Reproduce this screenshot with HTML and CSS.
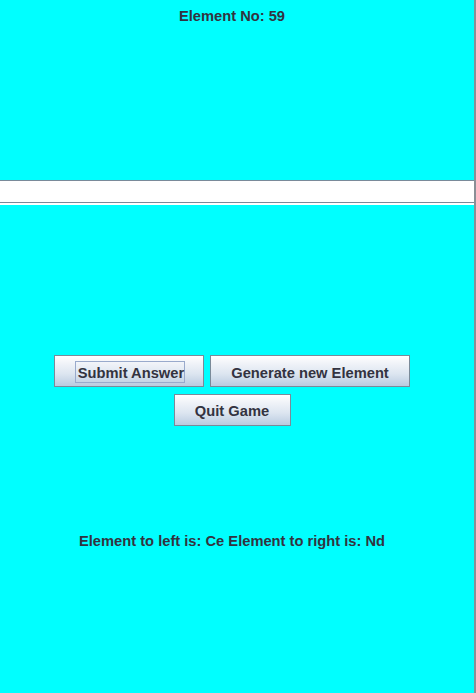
FILE: index.html
```html
<!DOCTYPE html>
<html>
<head>
<meta charset="utf-8">
<link rel="stylesheet" href="styles.css">
</head>
<body>
<div class="app">
  <div class="title">Element No: 59</div>
  <div class="field"><div class="field-inner"></div></div>
  <div class="controls">
    <div class="row">
      <button class="btn btn-submit"><span class="focus">Submit Answer</span></button>
      <button class="btn btn-gen">Generate new Element</button>
    </div>
    <div class="row row2">
      <button class="btn btn-quit">Quit Game</button>
    </div>
  </div>
  <div class="hint">Element to left is: Ce Element to right is: Nd</div>
</div>
</body>
</html>
```
FILE: styles.css
```css
html, body {
  margin: 0;
  padding: 0;
  background: #00ffff;
}
.app {
  width: 474px;
  height: 693px;
  background: #00ffff;
  border-right: 2px solid #8a8f96;
  font-family: "Liberation Sans", Arial, sans-serif;
  font-weight: bold;
  font-size: 14.7px;
  color: #333340;
  overflow: hidden;
  white-space: nowrap;
}
.title {
  height: 173px;
  padding-top: 7px;
  line-height: 18px;
  text-align: center;
  padding-right: 10px;
  box-sizing: content-box;
}
.field {
  height: 25px;
  box-sizing: border-box;
  background: #ffffff;
  border-top: 1px solid #7a8a99;
}
.field-inner {
  height: 21px;
  border-bottom: 1px solid #7a8a99;
}
.controls {
  margin-top: 150px;
  width: 464px;
}
.row {
  display: flex;
  justify-content: center;
  gap: 6px;
}
.row2 {
  margin-top: 7px;
}
.btn {
  height: 32px;
  box-sizing: border-box;
  border: 1px solid #7a8a99;
  background: linear-gradient(to bottom, #ffffff 0%, #f0f3f8 25%, #dce5f0 60%, #b9cbe0 100%);
  font: inherit;
  color: inherit;
  padding: 0;
  display: flex;
  align-items: center;
  justify-content: center;
  white-space: nowrap;
}
.btn-submit { width: 150px; }
.btn-gen { width: 200px; padding-top: 3px; }
.btn-quit { width: 117px; padding-top: 2px; }
.focus {
  border: 1px solid #99aacc;
  width: 110px;
  height: 22px;
  box-sizing: border-box;
  display: flex;
  align-items: center;
  justify-content: center;
  margin-left: 2px;
  margin-top: 2px;
  padding-left: 2px;
  padding-top: 2px;
}
.hint {
  margin-top: 106px;
  width: 464px;
  line-height: 18px;
  text-align: center;
}
```
